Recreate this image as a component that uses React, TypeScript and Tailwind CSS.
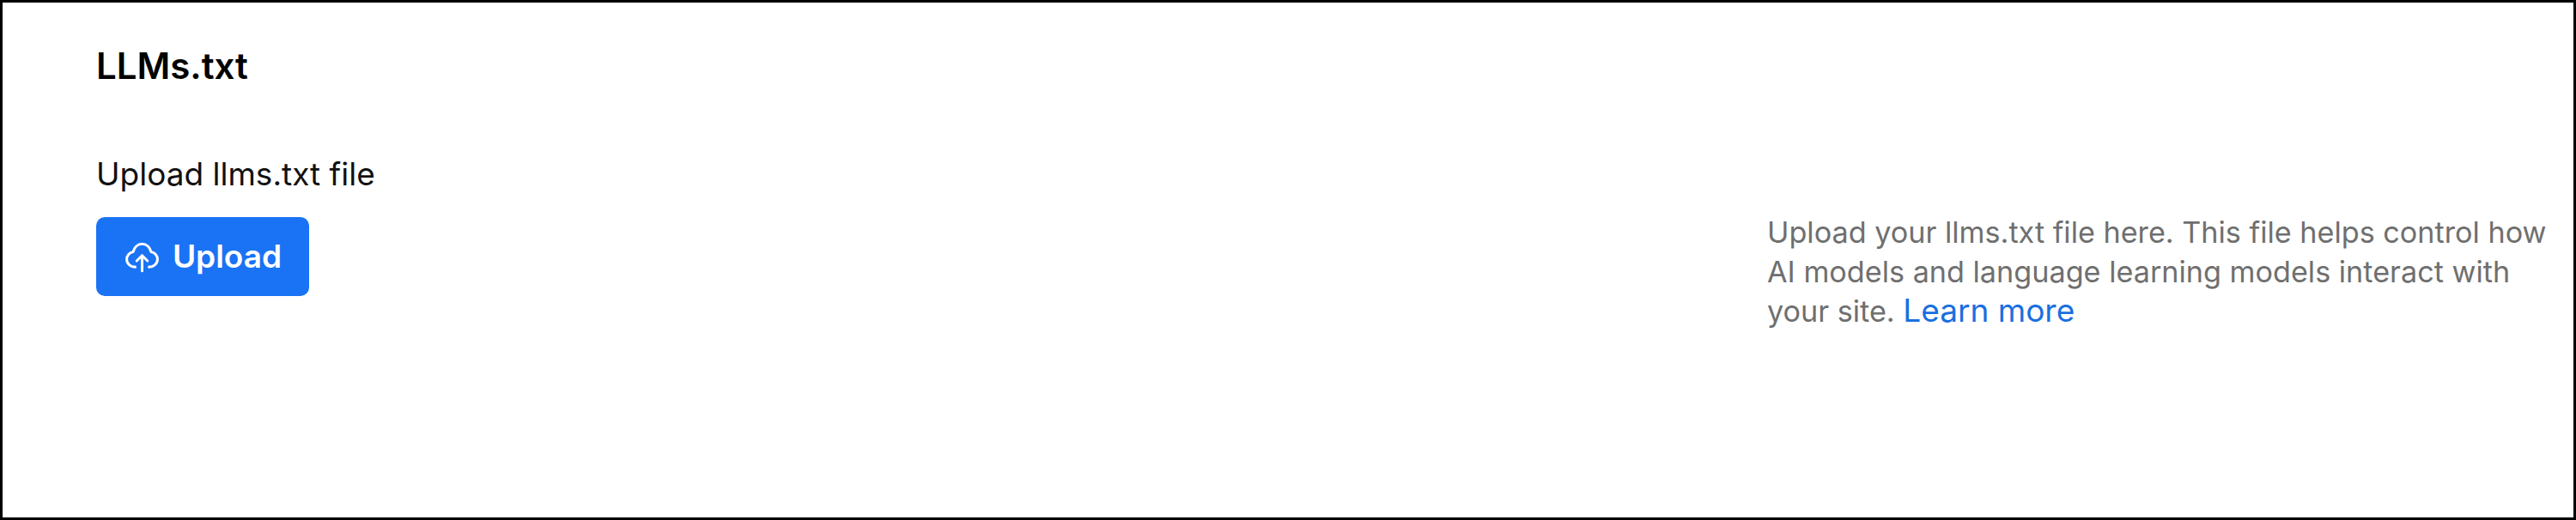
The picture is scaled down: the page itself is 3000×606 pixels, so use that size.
function UploadIcon() {
  return (
    <svg viewBox="0 0 24 24" fill="none" stroke="currentColor" strokeWidth={1.7} strokeLinecap="round" strokeLinejoin="round" className="w-[43px] h-[43px]">
      <path d="M7.5 18.5C4.5 18.5 2 16.3 2 13.5C2 11 3.8 9 6.2 8.6C7 5.6 9.2 3.5 12 3.5C14.8 3.5 17 5.6 17.8 8.6C20.2 9 22 11 22 13.5C22 16.3 19.5 18.5 16.5 18.5" />
      <path d="M12 21V11.5M8.5 14.5L12 11L15.5 14.5" />
    </svg>
  )
}

export default function App() {
  return (
    <div className="h-[606px] w-[3000px] border-[3px] border-black bg-white font-['Inter',sans-serif] flex justify-between overflow-hidden">
      <div className="pl-[109px] pt-[50px] flex flex-col items-start">
        <h1 className="text-[42px] leading-[48px] font-semibold text-black">LLMs.txt</h1>
        <p className="mt-[80px] text-[37px] leading-[44px] text-[#111]">Upload llms.txt file</p>
        <button className="mt-[28px] w-[248px] h-[92px] rounded-[10px] bg-[#1a73f5] text-white flex items-center justify-center gap-[14px] text-[37px] font-semibold">
          <UploadIcon />
          Upload
        </button>
      </div>
      <div className="w-[939px] pt-[245px]">
        <p className="w-[920px] text-[34.2px] leading-[46px] text-[#6f6f6f]">
          Upload your llms.txt file here. This file helps control how AI models and language learning models interact with your site. <a className="inline-block text-[37px] leading-[40px] text-[#1a6fe0]">Learn more</a>
        </p>
      </div>
    </div>
  )
}
